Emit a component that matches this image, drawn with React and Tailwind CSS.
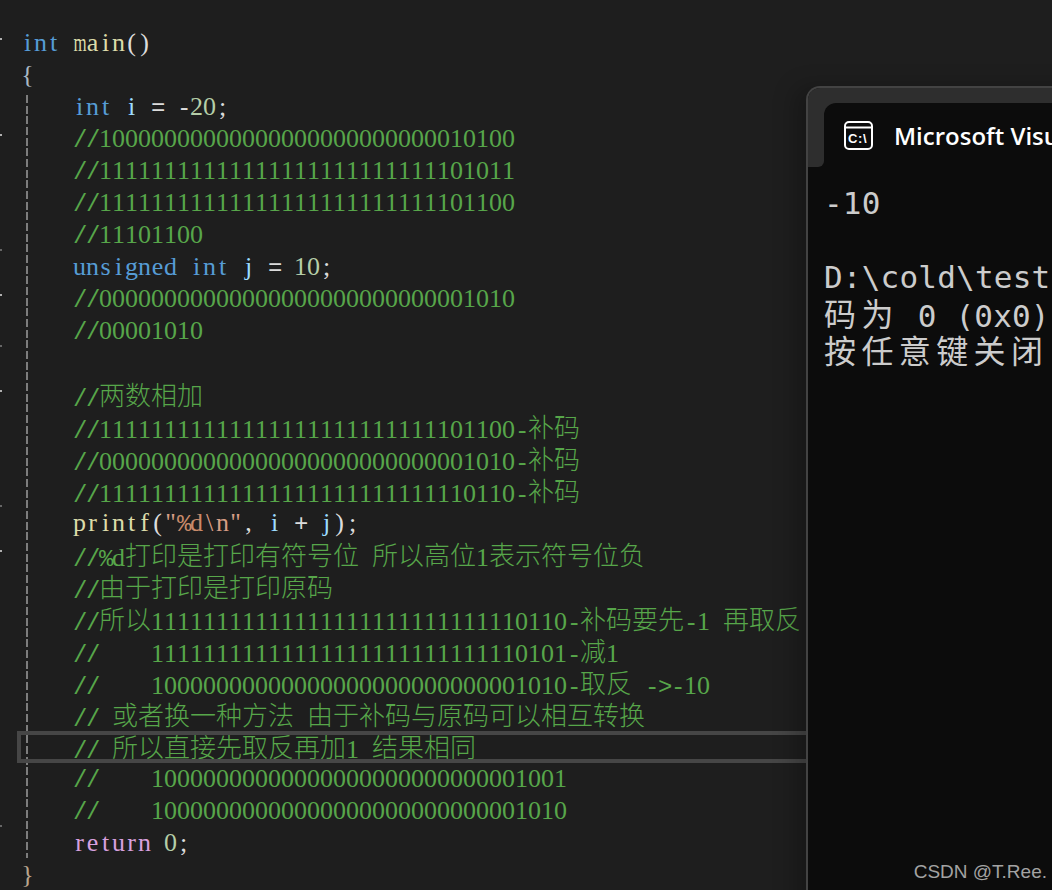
import React from 'react';

const BLUE = 'text-[#569cd6]';
const YELLOW = 'text-[#dcdcaa]';
const WHITE = 'text-[#dcdcdc]';
const VAR = 'text-[#9cdcfe]';
const NUM = 'text-[#b5cea8]';
const STR = 'text-[#d69d85]';
const KEY = 'text-[#d8a0df]';
const GREEN = 'text-[#57a64a]';

const ones = '1'.repeat(24);
const zeros = '0'.repeat(24);
const high = '1' + '0'.repeat(23);

// each line is a list of [text, color]; a plain string is a comment
const lines = [
  [['int', BLUE], [' ', WHITE], ['main', YELLOW], ['()', WHITE]],
  [['{', 'text-[#a9b8c4]']],
  [['    ', WHITE], ['int', BLUE], [' ', WHITE], ['i', VAR], [' = -', WHITE], ['20', NUM], [';', WHITE]],
  `    //${high}00010100`,
  `    //${ones}11101011`,
  `    //${ones}11101100`,
  '    //11101100',
  [['    ', WHITE], ['unsigned', BLUE], [' ', WHITE], ['int', BLUE], [' ', WHITE], ['j', VAR], [' = ', WHITE], ['10', NUM], [';', WHITE]],
  `    //${zeros}00001010`,
  '    //00001010',
  '',
  '    //两数相加',
  `    //${ones}11101100-补码`,
  `    //${zeros}00001010-补码`,
  `    //${ones}11110110-补码`,
  [['    ', WHITE], ['printf', YELLOW], ['(', WHITE], ['"', STR], ['%d', 'text-[#c98a6a]'], ['\\n"', STR], [', ', WHITE], ['i', VAR], [' + ', WHITE], ['j', VAR], [');', WHITE]],
  '    //%d打印是打印有符号位 所以高位1表示符号位负',
  '    //由于打印是打印原码',
  `    //所以${ones}11110110-补码要先-1 再取反`,
  `    //    ${ones}11110101-减1`,
  `    //    ${high}00001010-取反 ->-10`,
  '    // 或者换一种方法 由于补码与原码可以相互转换',
  '    // 所以直接先取反再加1 结果相同',
  `    //    ${high}00001001`,
  `    //    ${high}00001010`,
  [['    ', WHITE], ['return', KEY], [' ', WHITE], ['0', NUM], [';', WHITE]],
  [['}', 'text-[#b9a48e]']],
];

const ticks = [
  { y: 38, bright: true },
  { y: 134, bright: true },
  { y: 249, bright: false },
  { y: 294, bright: true },
  { y: 345, bright: false },
  { y: 390, bright: true },
  { y: 505, bright: false },
  { y: 550, bright: true },
  { y: 825, bright: false },
];

// serif letters go in 13px cells, since the face has no monospace serif
function Cells({ text, color }) {
  return (
    <span className={`font-['Liberation_Serif',serif] text-[26px] leading-none ${color}`}>
      {[...text].map((ch, i) =>
        ch === 'm' ? (
          <span key={i} className="inline-block w-[20px] -mx-[3.5px] scale-x-[0.65]">
            {ch}
          </span>
        ) : (
          <span key={i} className="inline-block w-[13px] text-center">
            {ch}
          </span>
        )
      )}
    </span>
  );
}

function CodeText({ text, color }) {
  const parts = text.match(/\d+|[\u4e00-\u9fff]+|[a-zA-Z(){};,"\\]+|[^\da-zA-Z(){};,"\\\u4e00-\u9fff]+/g) || [];
  return parts.map((part, i) => {
    if (/^[a-zA-Z(){};,"\\]/.test(part)) return <Cells key={i} text={part} color={color} />;
    let font = "font-['Liberation_Mono',monospace] text-[24px] tracking-[-1.4px]";
    // kerning off, the serif face pulls 11 pairs together
    if (/^\d/.test(part)) font = "font-['Liberation_Serif',serif] text-[26px] [font-kerning:none]";
    else if (/^[\u4e00-\u9fff]/.test(part)) font = "font-['Noto_Sans_CJK_SC',sans-serif] text-[26px] font-light align-[1px]";
    return (
      <span key={i} className={`${font} leading-none ${color}`}>
        {part}
      </span>
    );
  });
}

function CodeLine({ line }) {
  const segments = typeof line === 'string' ? [[line, GREEN]] : line;
  return (
    <div className="h-8 leading-8 whitespace-pre">
      {segments.map(([text, color], i) => (
        <CodeText key={i} text={text} color={color} />
      ))}
    </div>
  );
}

function ConsoleIcon() {
  return (
    <svg width="29" height="29" viewBox="0 0 29 29" fill="none" className="shrink-0">
      <rect x="1" y="1" width="27" height="27" rx="4" stroke="#fff" strokeWidth="2" />
      <line x1="1" y1="6.5" x2="28" y2="6.5" stroke="#fff" strokeWidth="2" />
      <text x="4" y="21.5" fill="#fff" fontSize="13" fontWeight="700" letterSpacing="0.6" fontFamily="Liberation Sans, sans-serif">
        C:\
      </text>
    </svg>
  );
}

function TermCjk({ children }) {
  return (
    <span className="text-[32px] leading-none tracking-[5.4px] align-[1px] font-['Noto_Sans_CJK_SC',sans-serif]">{children}</span>
  );
}

function ConsoleWindow() {
  return (
    <div className="absolute left-[806px] top-[86px] w-[300px] h-[840px] flex flex-col bg-[#0c0c0c] border-l-2 border-t-2 border-[#434343] rounded-tl-[14px] overflow-hidden shadow-[-12px_0_22px_rgba(0,0,0,0.22)]">
      <div className="h-[15px] bg-[#2e2e2e] shrink-0" />
      <div className="flex h-[64px] shrink-0">
        <div className="w-[16px] bg-[#2e2e2e] rounded-br-[6px] shrink-0" />
        <div className="flex-1 bg-[#2e2e2e]">
          <div className="h-full flex items-center pl-[20px] gap-[21px] bg-[#0c0c0c] rounded-tl-[12px]">
            <ConsoleIcon />
            <span className="pt-[2px] text-[24px] font-semibold text-white whitespace-nowrap font-['Open_Sans',sans-serif]">
              Microsoft Visual Studio 调试控制台
            </span>
          </div>
        </div>
      </div>
      <div className="pt-[18px] pl-[16px] text-[31px] leading-[37px] tracking-[0.2px] text-[#cccccc] whitespace-pre font-['DejaVu_Sans_Mono',monospace]">
        <div className="h-[37px]">-10</div>
        <div className="h-[37px]" />
        <div className="h-[37px]">{'D:\\cold\\test'}</div>
        <div className="h-[37px]">
          <TermCjk>码为</TermCjk> 0 (0x0)
        </div>
        <div className="h-[37px]">
          <TermCjk>按任意键关闭</TermCjk>
        </div>
      </div>
    </div>
  );
}

export default function App() {
  return (
    <div className="relative w-[1052px] h-[890px] overflow-hidden bg-[#1e1e1e]">
      <div className="pl-[21px] pt-[29px]">
        {lines.map((line, i) => (
          <CodeLine key={i} line={line} />
        ))}
      </div>

      {/* fold markers in the margin */}
      {ticks.map((tick) => (
        <div
          key={tick.y}
          className={`absolute left-0 w-[2px] h-[2px] ${tick.bright ? 'bg-[#b0b0b0]' : 'bg-[#666666]'}`}
          style={{ top: tick.y }}
        />
      ))}

      {/* indent guide */}
      <div className="absolute left-[26px] top-[95px] w-[2px] h-[763px] bg-[repeating-linear-gradient(to_bottom,#7d7d7d_0,#7d7d7d_8px,transparent_8px,transparent_10.67px)]" />

      {/* current line box */}
      <div className="absolute left-[17px] top-[731px] w-[800px] h-[32px] border-[4px] border-[#464646]" />

      <ConsoleWindow />

      <div className="absolute right-[5px] bottom-[6px] text-[19px] leading-6 text-[#a3a3a3] font-['Liberation_Sans',sans-serif]">
        CSDN @T.Ree.
      </div>
    </div>
  );
}
